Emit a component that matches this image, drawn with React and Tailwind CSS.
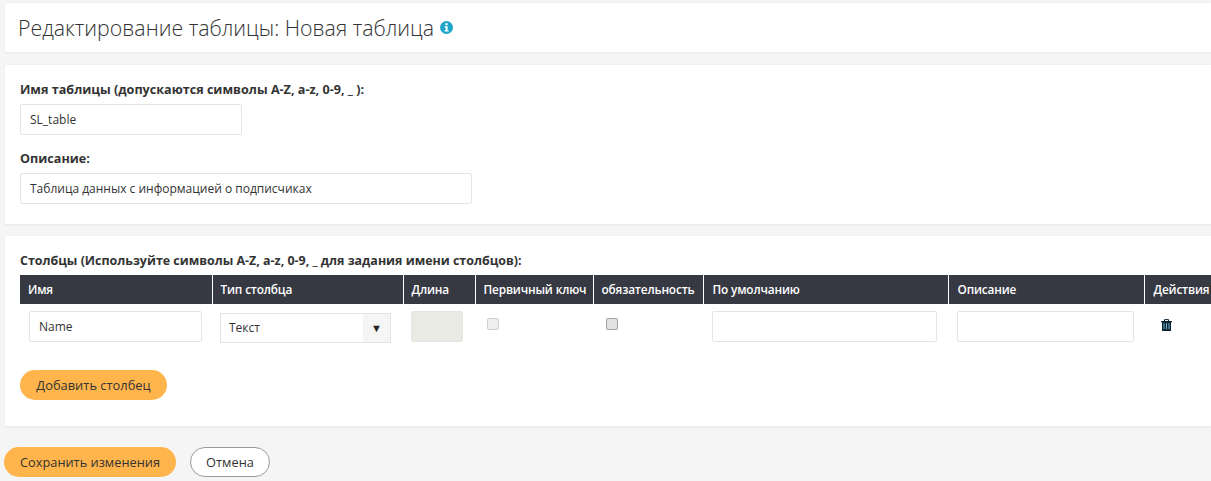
const columns = [
  { title: 'Имя', width: 'w-[192px]', pad: 'pl-[8px]' },
  { title: 'Тип столбца', width: 'w-[191px]', pad: 'pl-[8px]' },
  { title: 'Длина', width: 'w-[72px]', pad: 'pl-[8px]' },
  { title: 'Первичный ключ', width: 'w-[118px]', pad: 'pl-[8px]' },
  { title: 'обязательность', width: 'w-[110px]', pad: 'pl-[8px]' },
  { title: 'По умолчанию', width: 'w-[245px]', pad: 'pl-[9px]' },
  { title: 'Описание', width: 'w-[196px]', pad: 'pl-[9px]' },
  { title: 'Действия', width: 'w-[81px]', pad: 'pl-[9px]' },
];

const inputClass =
  'h-[31px] rounded-[2px] border border-[#e5e5e5] bg-white px-[9px] text-[12px] text-[#333] outline-none';

const checkClass =
  'block h-[12px] w-[12px] appearance-none rounded-[2px] border';

const InfoIcon = () => (
  <svg viewBox="0 0 13 13" className="ml-[6px] h-[13px] w-[13px]">
    <circle cx="6.5" cy="6.5" r="6.5" fill="#1ea5c9" />
    <rect x="5.4" y="2.2" width="2.2" height="2" fill="#fff" />
    <path d="M4.6 5.2h3v4h1v1.3H4.6V9.2h1V6.5h-1z" fill="#fff" />
  </svg>
);

const TrashIcon = () => (
  <svg viewBox="0 0 11 12" className="h-[12px] w-[11px]">
    <path d="M3.5 2V.6h4V2" fill="none" stroke="#0b2233" strokeWidth="1" />
    <rect x="0" y="2" width="11" height="1.2" fill="#0b2233" />
    <path d="M1 3h9v9H1z" fill="#0b2233" />
    <path d="M3 4.2v6M5.5 4.2v6M8 4.2v6" stroke="#7db4d6" strokeWidth="1" />
  </svg>
);

const App = () => {
  return (
    <div className="h-[481px] w-[1211px] overflow-hidden bg-[#f5f5f5] pt-[3px] font-['Open_Sans',sans-serif] text-[12px] text-[#333]">
      <div className="ml-[5px] flex h-[50px] items-center border-b border-[#ebebeb] bg-white pl-[13px] shadow-[0_0_2px_rgba(0,0,0,0.06)]">
        <h1 className="text-[21.3px] leading-none font-light text-[#333]">
          Редактирование таблицы: Новая таблица
        </h1>
        <InfoIcon />
      </div>

      <div className="mt-[12px] ml-[5px] h-[160px] border-b border-[#ebebeb] bg-white px-[15px] pt-[16px] shadow-[0_0_2px_rgba(0,0,0,0.06)]">
        <label className="block text-[12.6px] leading-[17px] font-bold">
          Имя таблицы (допускаются символы A-Z, a-z, 0-9, _ ):
        </label>
        <input readOnly value="SL_table" className={`${inputClass} mt-[6px] block w-[222px]`} />
        <label className="mt-[15px] block text-[12.6px] leading-[17px] font-bold">Описание:</label>
        <input
          readOnly
          value="Таблица данных с информацией о подписчиках"
          className={`${inputClass} mt-[6px] block w-[452px]`}
        />
      </div>

      <div className="mt-[11px] ml-[5px] h-[191px] overflow-hidden border-b border-[#ebebeb] bg-white pt-[16px] pl-[15px] shadow-[0_0_2px_rgba(0,0,0,0.06)]">
        <div className="text-[12.45px] leading-[17px] font-bold">
          Столбцы (Используйте символы A-Z, a-z, 0-9, _ для задания имени столбцов):
        </div>
        <table className="mt-[6px] w-[1205px] table-fixed border-collapse">
          <thead>
            <tr className="h-[29px] bg-[#363942] text-left text-white">
              {columns.map((col, i) => (
                <th
                  key={col.title}
                  className={`${col.width} ${col.pad} ${i > 0 ? 'border-l border-white' : ''} text-[11.8px] font-semibold tracking-[-0.15px] whitespace-nowrap`}
                >
                  {col.title}
                </th>
              ))}
            </tr>
          </thead>
          <tbody>
            <tr className="h-[45px] align-top">
              <td className="pt-[7px] pl-[9px]">
                <input readOnly value="Name" className={`${inputClass} block w-[173px]`} />
              </td>
              <td className="pt-[9px] pl-[8px]">
                <div className="flex h-[30px] w-[171px] border border-[#e5e5e5] bg-white">
                  <span className="flex-1 pl-[8px] leading-[28px]">Текст</span>
                  <span className="flex w-[27px] items-center justify-center bg-[#f5f5f5] text-[11px] text-[#222]">
                    ▼
                  </span>
                </div>
              </td>
              <td className="pt-[7px] pl-[8px]">
                <div className="h-[31px] w-[52px] rounded-[2px] border border-[#e5e5e0] bg-[#eaeae4]" />
              </td>
              <td className="pt-[14px] pl-[12px]">
                <input type="checkbox" disabled className={`${checkClass} border-[#cfcfcf] bg-[#eeeeee]`} />
              </td>
              <td className="pt-[14px] pl-[13px]">
                <input type="checkbox" className={`${checkClass} border-[#a0a0a0] bg-[#e2e2e2]`} />
              </td>
              <td className="pt-[7px] pl-[9px]">
                <input readOnly className={`${inputClass} block w-[225px]`} />
              </td>
              <td className="pt-[7px] pl-[9px]">
                <input readOnly className={`${inputClass} block w-[177px]`} />
              </td>
              <td className="pt-[15px] pl-[17px]">
                <TrashIcon />
              </td>
            </tr>
          </tbody>
        </table>
        <button className="mt-[21px] block h-[30px] w-[147px] rounded-full bg-[#ffb54c] pt-[1px] text-[12.9px] text-[#333]">
          Добавить столбец
        </button>
      </div>

      <div className="mt-[20px] ml-[4px] flex gap-[14px]">
        <button className="h-[30px] w-[172px] rounded-full bg-[#ffb54c] pt-[1px] text-[12.8px] text-[#333]">
          Сохранить изменения
        </button>
        <button className="h-[30px] w-[80px] rounded-full border border-[#999] bg-white pt-[1px] text-[12.8px] text-[#333]">
          Отмена
        </button>
      </div>
    </div>
  );
};

export default App;
